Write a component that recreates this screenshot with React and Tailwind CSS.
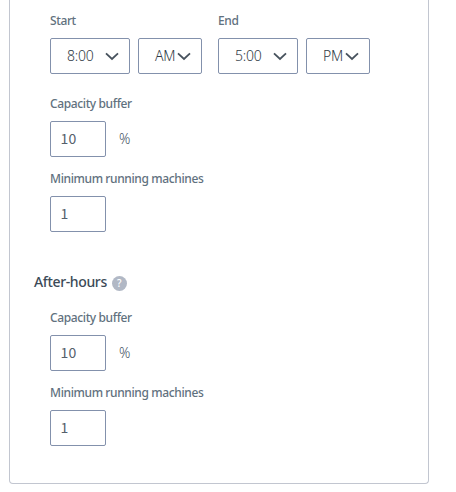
function Label({ children }) {
  return (
    <div className="mb-[9px] h-4 whitespace-nowrap text-[12px] leading-4 font-medium tracking-[-0.38px] text-[#61717e]">
      {children}
    </div>
  );
}

function Chevron() {
  return (
    <svg width="14" height="9" viewBox="0 0 14 9" fill="none" className="shrink-0">
      <path d="M1 1.3L7 7L13 1.3" stroke="#47525d" strokeWidth="1.8" />
    </svg>
  );
}

function Select({ value, size }) {
  return (
    <button
      type="button"
      className={`flex h-9 items-center justify-between rounded-[2px] border border-[#8391ac] bg-white pl-4 pr-2.5 text-[14px] leading-5 font-light text-[#2f3a45] ${
        size === "wide" ? "w-20" : "w-16"
      }`}
    >
      <span className="tracking-[-0.2px]">{value}</span>
      <Chevron />
    </button>
  );
}

function TimeField({ label, time, period }) {
  return (
    <div>
      <Label>{label}</Label>
      <div className="flex gap-2">
        <Select value={time} size="wide" />
        <Select value={period} size="narrow" />
      </div>
    </div>
  );
}

function NumberField({ label, value, unit }) {
  return (
    <div>
      <Label>{label}</Label>
      <div className="flex items-center gap-[13px]">
        <input
          defaultValue={value}
          className="h-9 w-14 rounded-[2px] border border-[#8391ac] bg-white px-[9.5px] pb-[2px] font-['Noto_Sans_CJK_SC','Noto_Sans',sans-serif] text-[14px] leading-5 font-normal tracking-[0.2px] text-[#56606b] outline-none"
        />
        {unit && <span className="text-[14px] leading-5 font-light text-[#46535f]">{unit}</span>}
      </div>
    </div>
  );
}

function CapacityFields() {
  return (
    <div className="flex flex-col gap-3.5 pl-4">
      <NumberField label="Capacity buffer" value="10" unit="%" />
      <NumberField label="Minimum running machines" value="1" />
    </div>
  );
}

export default function App() {
  return (
    <div className="h-[492px] w-[456px] overflow-hidden bg-white font-['Noto_Sans',sans-serif]">
      <div className="ml-[9px] h-[484px] w-[420px] rounded-b-[4px] border-x border-b border-[#c2c6d0] pt-[13px] pl-6">
        <div className="mb-[22px] flex gap-4 pl-4">
          <TimeField label="Start" time="8:00" period="AM" />
          <TimeField label="End" time="5:00" period="PM" />
        </div>
        <CapacityFields />
        <div className="mt-[42px] mb-[20px] flex h-4 items-center gap-[5px]">
          <h2 className="text-[14px] leading-4 font-medium tracking-[-0.36px] text-[#3c4a57]">After-hours</h2>
          <span className="mt-[2px] flex size-[15px] items-center justify-center rounded-full bg-[#b1b8c5] text-[10px] leading-none font-medium text-white">
            ?
          </span>
        </div>
        <CapacityFields />
      </div>
    </div>
  );
}
